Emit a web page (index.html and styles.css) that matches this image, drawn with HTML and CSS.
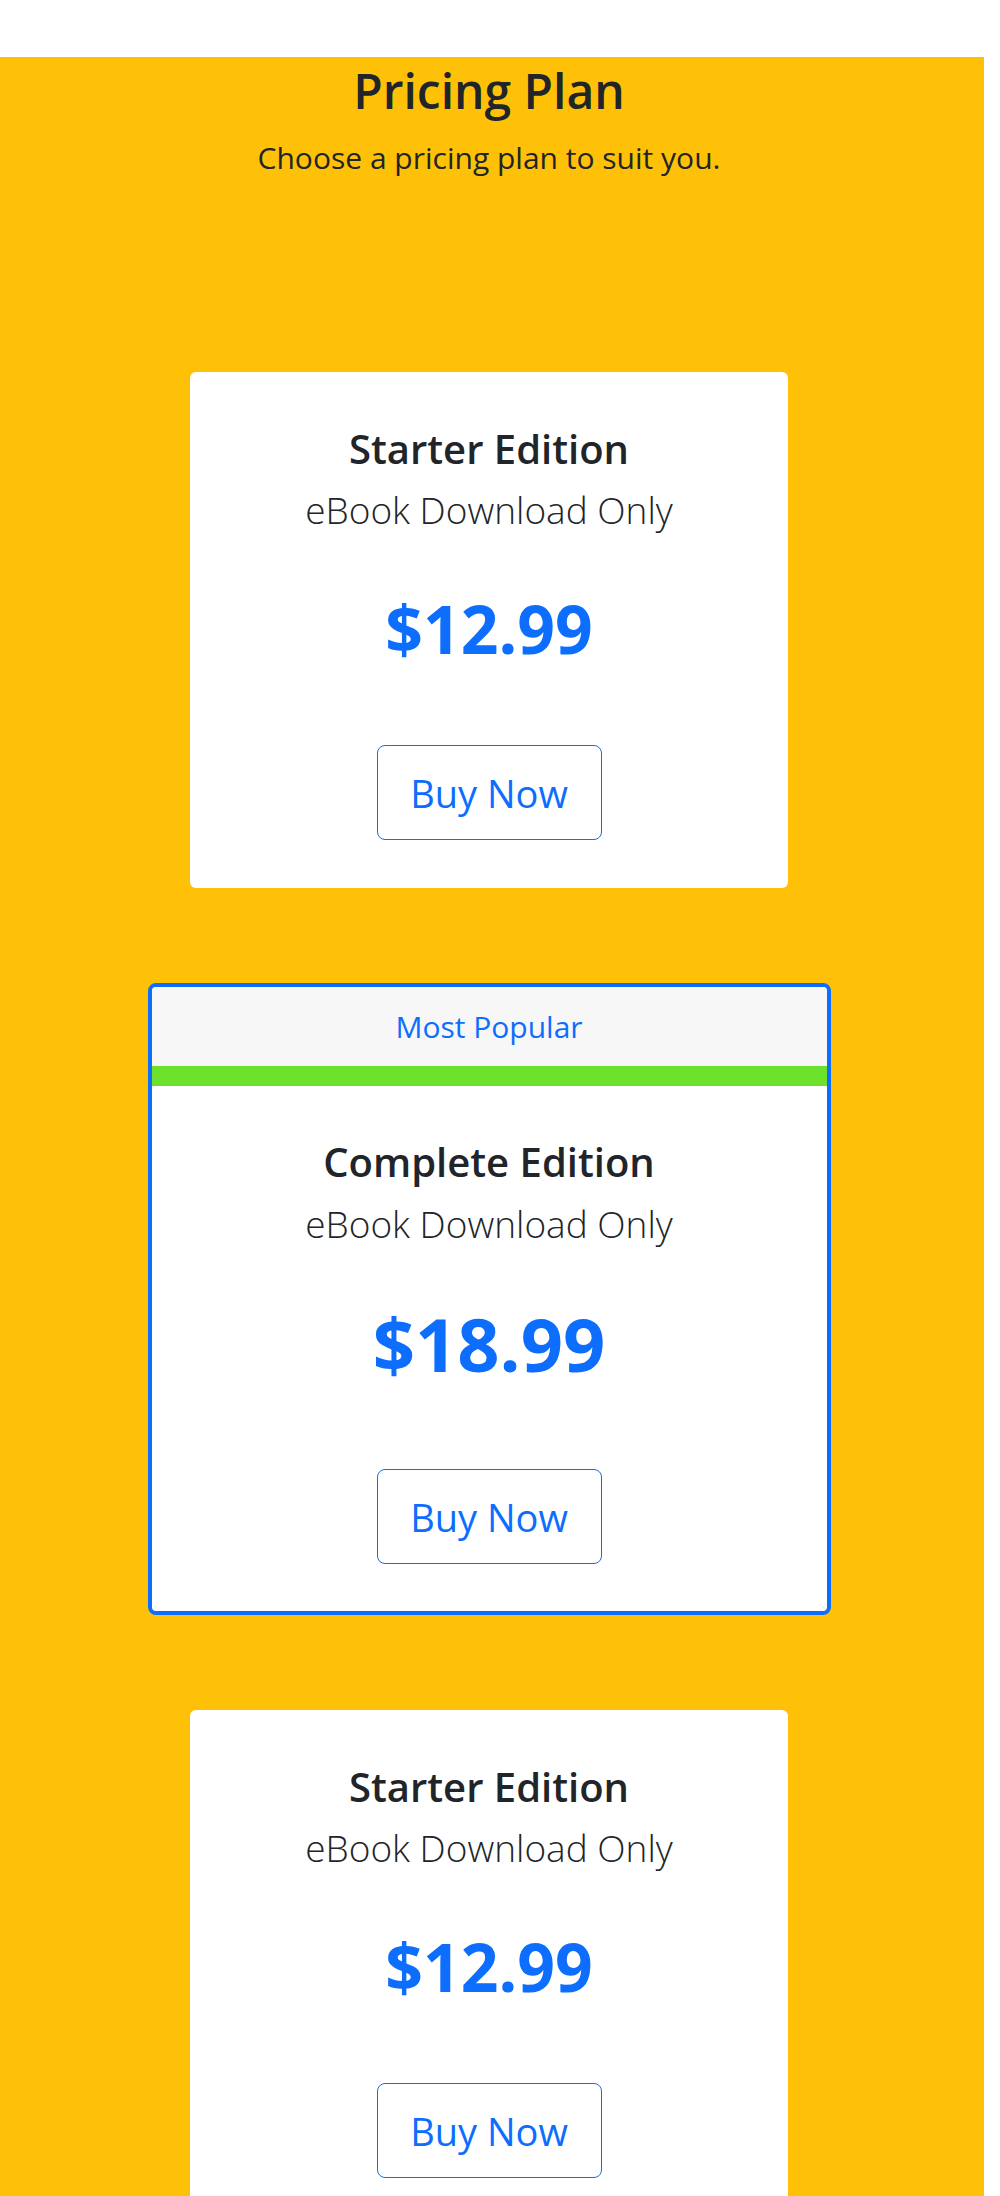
FILE: index.html
```html
<!DOCTYPE html>
<html lang="en">
<head>
<meta charset="utf-8">
<title>Pricing Plan</title>
<link rel="stylesheet" href="styles.css">
</head>
<body>
<div class="topbar"></div>
<section class="pricing">
  <header class="pricing-head">
    <h1 class="pricing-title">Pricing Plan</h1>
    <p class="pricing-sub">Choose a pricing plan to suit you.</p>
  </header>
  <div class="plans">
    <div class="plan">
      <h2 class="plan-name">Starter Edition</h2>
      <p class="plan-desc">eBook Download Only</p>
      <p class="plan-price">$12.99</p>
      <button class="btn-buy" type="button">Buy Now</button>
    </div>
    <div class="plan plan-featured">
      <div class="plan-badge">Most Popular</div>
      <div class="plan-stripe"></div>
      <h2 class="plan-name">Complete Edition</h2>
      <p class="plan-desc">eBook Download Only</p>
      <p class="plan-price plan-price-lg">$18.99</p>
      <button class="btn-buy" type="button">Buy Now</button>
    </div>
    <div class="plan">
      <h2 class="plan-name">Starter Edition</h2>
      <p class="plan-desc">eBook Download Only</p>
      <p class="plan-price">$12.99</p>
      <button class="btn-buy" type="button">Buy Now</button>
    </div>
  </div>
</section>
</body>
</html>
```
FILE: styles.css
```css
body {
  margin: 0;
  font-family: "Open Sans", "Noto Sans", sans-serif;
  color: #212529;
  background: #fff;
}
.topbar {
  height: 57px;
}
.pricing {
  background: #ffc107;
  margin-right: 16px;
  padding: 6px 6px 80px 0;
}
.pricing-head {
  text-align: center;
}
.pricing-title {
  margin: 0;
  font-size: 48px;
  font-weight: 600;
  line-height: 56px;
}
.pricing-sub {
  margin: 18px 0 0;
  font-size: 30px;
  line-height: 42px;
}
.plans {
  display: flex;
  flex-direction: column;
  align-items: center;
  gap: 95px;
  margin-top: 193px;
}
.plan {
  box-sizing: border-box;
  width: 598px;
  background: #fff;
  border-radius: 6px;
  padding: 55px 0 48px;
  display: flex;
  flex-direction: column;
  align-items: center;
  text-align: center;
}
.plan-name {
  margin: 0;
  font-size: 40px;
  font-weight: 600;
  line-height: 44px;
}
.plan-desc {
  margin: 19px 0 0;
  font-size: 37px;
  font-weight: 300;
  line-height: 40px;
}
.plan-price {
  margin: 59px 0 0;
  font-size: 66px;
  font-weight: 700;
  line-height: 78px;
  color: #0d6efd;
}
.btn-buy {
  margin-top: 78px;
  box-sizing: border-box;
  width: 225px;
  padding: 19px 0 18px;
  border: 1px solid #0d6efd;
  border-radius: 8px;
  background: #fff;
  color: #0d6efd;
  font-family: "Open Sans", "Noto Sans", sans-serif;
  font-size: 38px;
  font-weight: 400;
  line-height: 56px;
  cursor: pointer;
}
.plan-featured {
  width: 683px;
  border: 4px solid #0d6efd;
  border-radius: 8px;
  padding: 0 0 47px;
  overflow: hidden;
}
.plan-badge {
  align-self: stretch;
  background: #f7f7f7;
  color: #0d6efd;
  font-size: 30px;
  line-height: 45px;
  padding: 17px 0;
}
.plan-stripe {
  align-self: stretch;
  height: 20px;
  background: #6de22d;
}
.plan-featured .plan-name {
  margin-top: 54px;
}
.plan-featured .plan-desc {
  margin-top: 20px;
}
.plan-price-lg {
  margin-top: 57px;
  font-size: 74px;
  line-height: 86px;
}
.plan-featured .btn-buy {
  margin-top: 82px;
}
```
